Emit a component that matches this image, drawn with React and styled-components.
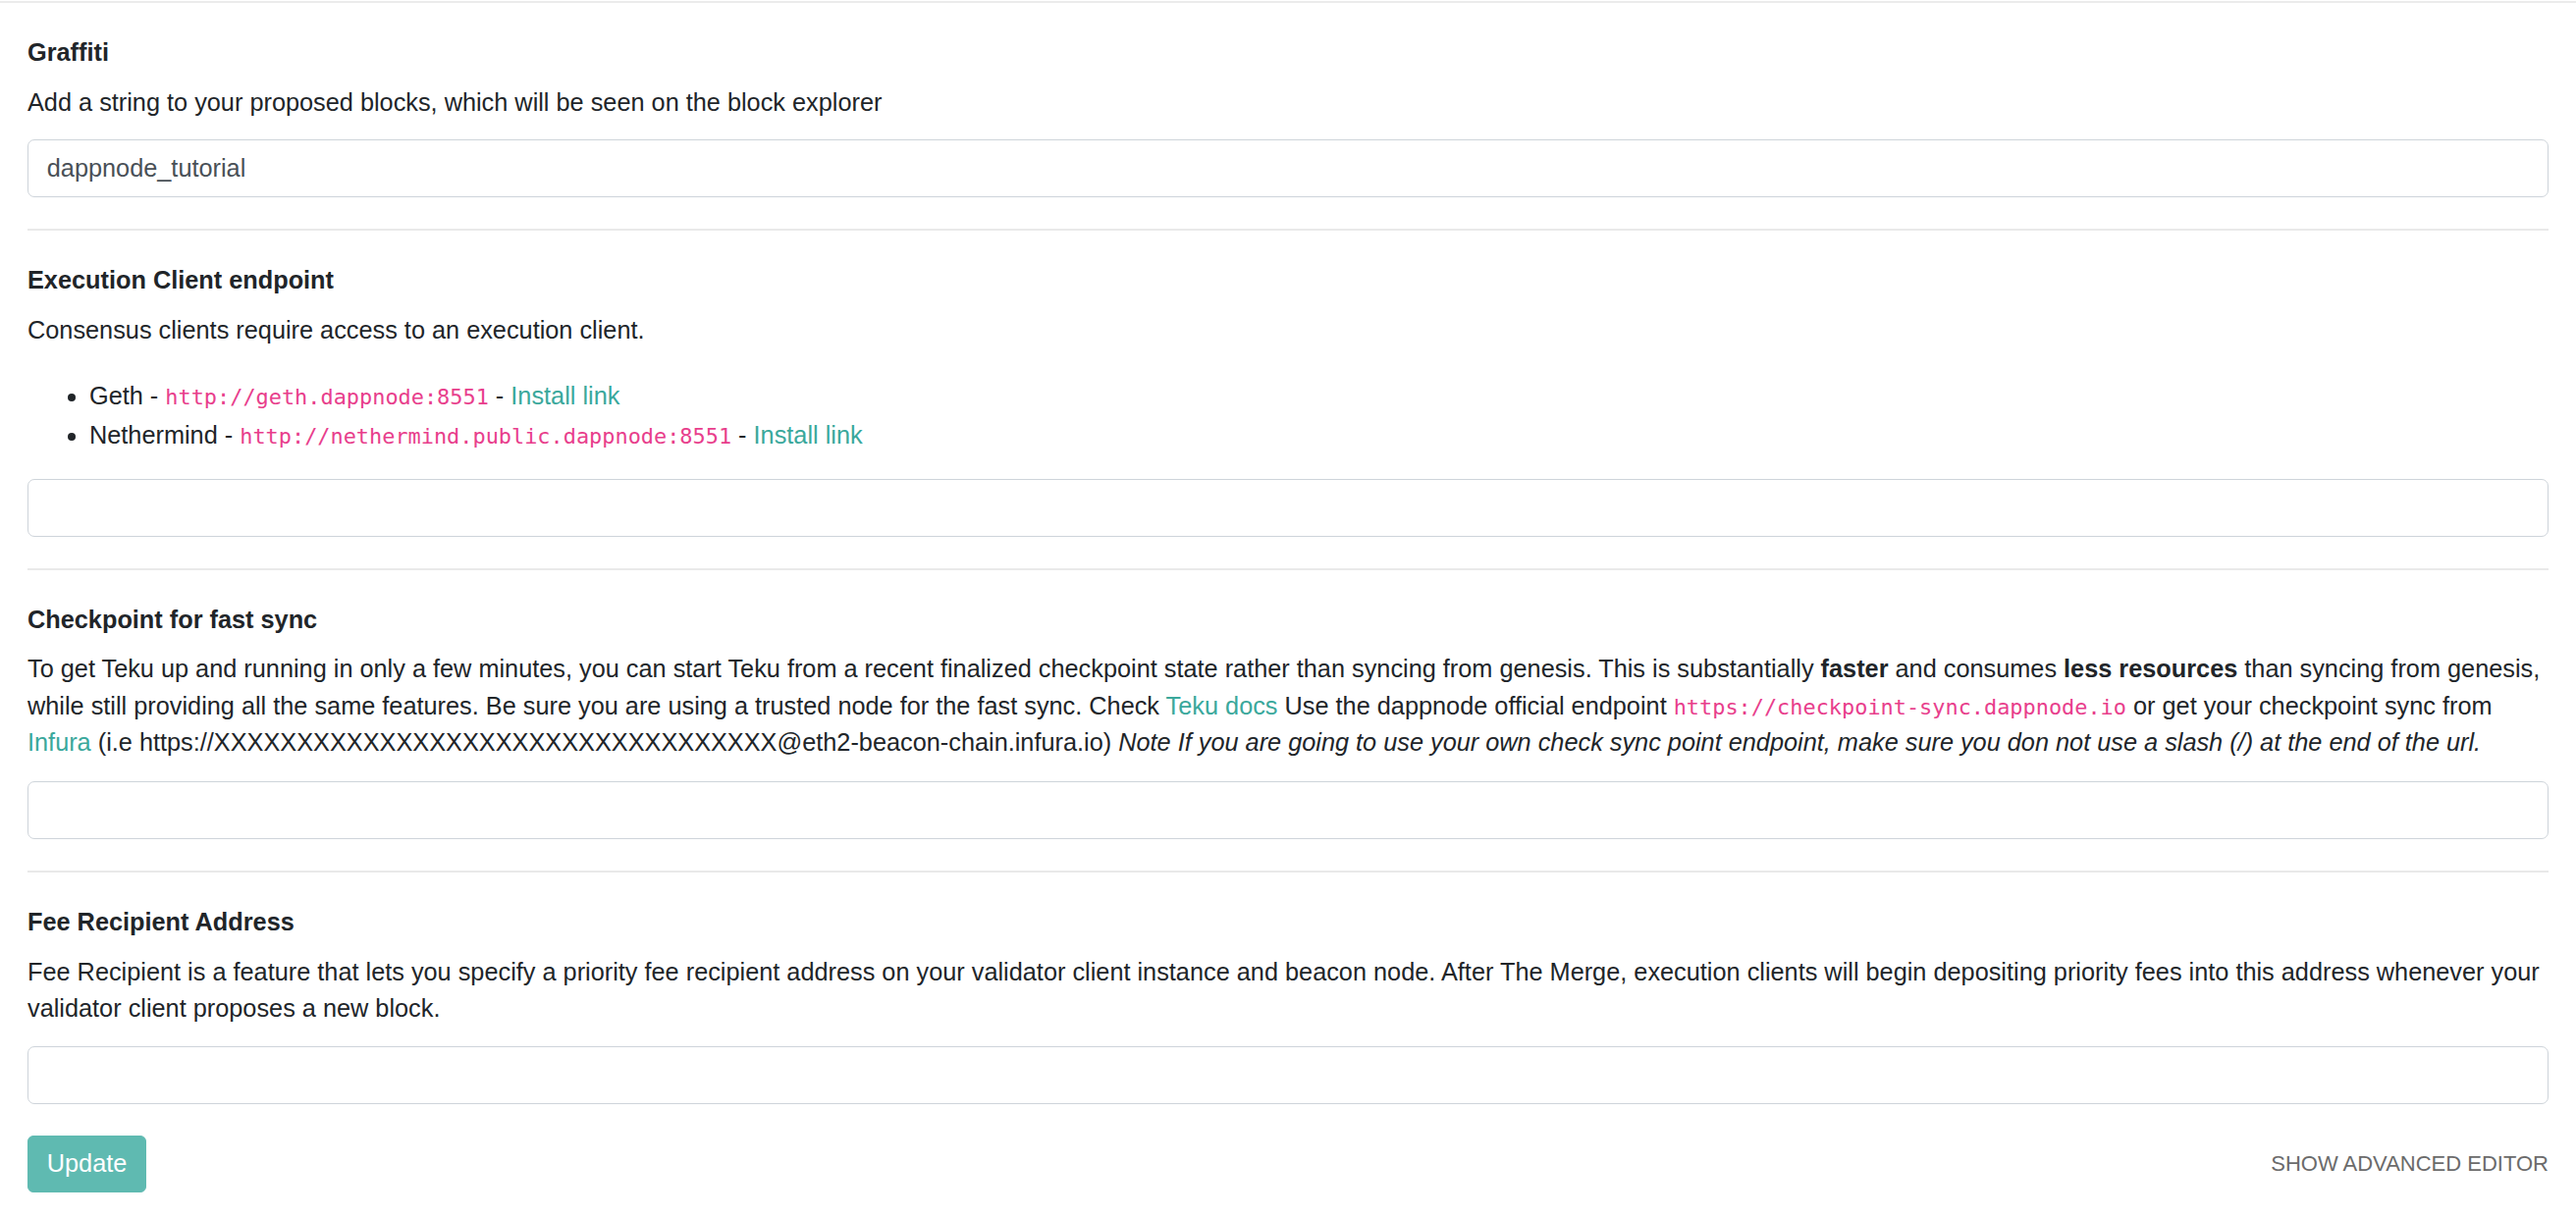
import React from "react";
import styled, { createGlobalStyle } from "styled-components";

const GlobalStyle = createGlobalStyle`
  html, body {
    margin: 0;
    padding: 0;
    background: #ffffff;
  }
  body {
    font-family: "Liberation Sans", Arial, Helvetica, sans-serif;
    font-size: 25.3px;
    line-height: 37.5px;
    color: #212529;
  }
  * { box-sizing: border-box; }
`;

const Card = styled.div`
  margin-top: 1px;
  border-top: 2px solid #ebebeb;
  padding: 0 28px;
  width: 100%;
`;

const Section = styled.div`
  padding: 32px 0;
`;

const Divider = styled.div`
  height: 2px;
  background: #e9e9e9;
`;

const Title = styled.div`
  font-weight: bold;
  margin-bottom: 13px;
`;

const Desc = styled.p`
  margin: 0 0 ${(p) => p.mb || 19}px 0;
`;

const List = styled.ul`
  margin: 0 0 25px 0;
  padding-left: 63px;
  li {
    line-height: 40px;
  }
`;

const Code = styled.code`
  font-family: "DejaVu Sans Mono", "Liberation Mono", monospace;
  font-size: 21.9px;
  line-height: 1;
  color: #e83e8c;
`;

const Link = styled.a`
  color: #3aa89c;
  text-decoration: none;
`;

const Input = styled.input`
  display: block;
  width: 100%;
  height: 59px;
  padding: 9px 18.75px;
  font-family: "Liberation Sans", Arial, sans-serif;
  font-size: 25.3px;
  color: #495057;
  background: #fff;
  border: 1px solid #ced4da;
  border-radius: 7px;
  outline: none;
`;

const Footer = styled.div`
  display: flex;
  justify-content: space-between;
  align-items: center;
  padding: 0 0 24px;
`;

const Button = styled.button`
  height: 58px;
  padding: 0 18.75px;
  font-family: "Liberation Sans", Arial, sans-serif;
  font-size: 25.3px;
  color: #ffffff;
  background: #5fbab1;
  border: 1px solid #5fbab1;
  border-radius: 6px;
`;

const TextButton = styled.button`
  background: none;
  border: none;
  padding: 0;
  font-family: "Liberation Sans", Arial, sans-serif;
  font-size: 22px;
  text-transform: uppercase;
  color: #6b6b6b;
`;

const Field = ({ title, children, value }) => (
  <Section>
    <Title>{title}</Title>
    {children}
    <Input defaultValue={value || ""} />
  </Section>
);

const App = () => {
  return (
    <>
      <GlobalStyle />
      <Card>
        <Field title="Graffiti" value="dappnode_tutorial">
          <Desc>Add a string to your proposed blocks, which will be seen on the block explorer</Desc>
        </Field>
        <Divider />
        <Field title="Execution Client endpoint">
          <Desc mb={27.5}>Consensus clients require access to an execution client.</Desc>
          <List>
            <li>
              Geth - <Code>http://geth.dappnode:8551</Code> - <Link href="#">Install link</Link>
            </li>
            <li>
              Nethermind - <Code>http://nethermind.public.dappnode:8551</Code> -{" "}
              <Link href="#">Install link</Link>
            </li>
          </List>
        </Field>
        <Divider />
        <Field title="Checkpoint for fast sync">
          <Desc mb={20.5}>
            To get Teku up and running in only a few minutes, you can start Teku from a recent finalized
            checkpoint state rather than syncing from genesis. This is substantially <strong>faster</strong> and
            consumes <strong>less resources</strong> than syncing from genesis, while still providing all the same
            features. Be sure you are using a trusted node for the fast sync. Check <Link href="#">Teku docs</Link>{" "}
            Use the dappnode official endpoint <Code>https://checkpoint-sync.dappnode.io</Code> or get your
            checkpoint sync from <Link href="#">Infura</Link> (i.e
            https://XXXXXXXXXXXXXXXXXXXXXXXXXXXXXXXXXX@eth2-beacon-chain.infura.io){" "}
            <em>
              Note If you are going to use your own check sync point endpoint, make sure you don not use a slash (/)
              at the end of the url.
            </em>
          </Desc>
        </Field>
        <Divider />
        <Field title="Fee Recipient Address">
          <Desc>
            Fee Recipient is a feature that lets you specify a priority fee recipient address on your validator
            client instance and beacon node. After The Merge, execution clients will begin depositing priority fees
            into this address whenever your validator client proposes a new block.
          </Desc>
        </Field>
        <Footer>
          <Button>Update</Button>
          <TextButton>Show advanced editor</TextButton>
        </Footer>
      </Card>
    </>
  );
};

export default App;
